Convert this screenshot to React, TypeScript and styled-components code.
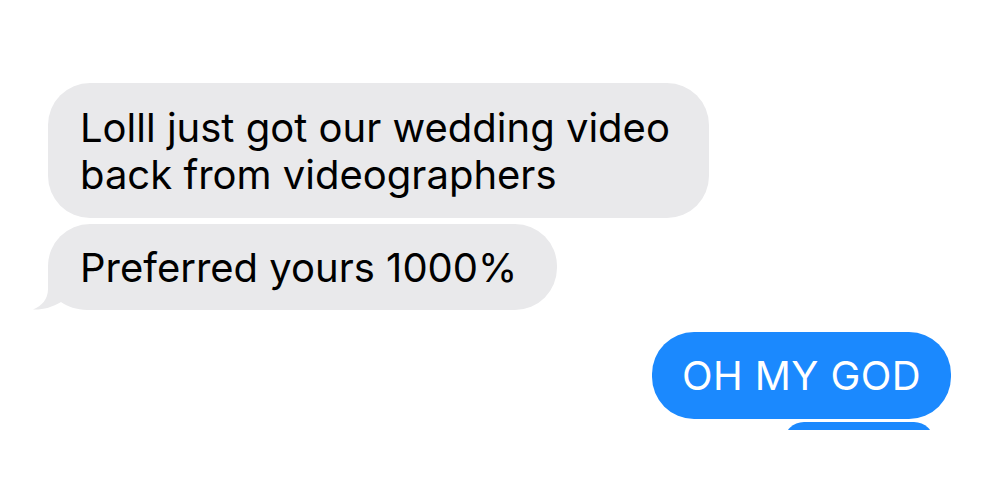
import React from "react";
import styled, { createGlobalStyle } from "styled-components";

const Global = createGlobalStyle`
  html, body { margin: 0; padding: 0; background: #ffffff; }
  body { font-family: Inter, "Noto Sans", "Liberation Sans", sans-serif; }
`;

const Screen = styled.div`
  width: 1000px;
  height: 430px;
  overflow: hidden;
  background: #ffffff;
  display: flex;
  flex-direction: column;
  padding: 83px 49px 0 48px;
  box-sizing: border-box;
`;

const Group = styled.div<{ $side: "left" | "right"; $gapTop?: number; $gap: number }>`
  display: flex;
  flex-direction: column;
  align-items: ${(p) => (p.$side === "left" ? "flex-start" : "flex-end")};
  gap: ${(p) => p.$gap}px;
  margin-top: ${(p) => p.$gapTop ?? 0}px;
`;

const Bubble = styled.div<{ $out?: boolean; $w: number; $h: number }>`
  position: relative;
  box-sizing: border-box;
  width: ${(p) => p.$w}px;
  height: ${(p) => p.$h}px;
  display: flex;
  align-items: center;
  background: ${(p) => (p.$out ? "#1b89fe" : "#e9e9eb")};
  color: ${(p) => (p.$out ? "#ffffff" : "#000000")};
  font-size: 40px;
  line-height: 47px;
  letter-spacing: ${(p) => (p.$out ? "0.4px" : "0px")};
  padding: 0 ${(p) => (p.$out ? 30 : 32)}px;
  border-radius: 42px;
  white-space: nowrap;
`;

const Text = styled.div`
  position: relative;
  z-index: 1;
`;

const TailSvg = styled.svg`
  position: absolute;
  left: -16px;
  bottom: 0;
  width: 60px;
  height: 43px;
  z-index: 0;
`;

const Stub = styled.div`
  width: 150px;
  height: 40px;
  margin-right: 17px;
  background: #1b89fe;
  border-radius: 42px;
`;

export default function App() {
  return (
    <>
      <Global />
      <Screen>
        <Group $side="left" $gap={6}>
          <Bubble $w={661} $h={135}>
            <Text>
              Lolll just got our wedding video
              <br />
              back from videographers
            </Text>
          </Bubble>
          <Bubble $w={509} $h={86}>
            <TailSvg viewBox="0 0 60 43">
              <path
                d="M16 0 L16 22 C16 32 10 39 1 42.5 C10 43 20 40.5 29 35 C36 40 44 42.5 56 43 L60 43 L60 0 Z"
                fill="#e9e9eb"
              />
            </TailSvg>
            <Text>Preferred yours 1000%</Text>
          </Bubble>
        </Group>
        <Group $side="right" $gapTop={22} $gap={3}>
          <Bubble $out $w={299} $h={87}>
            <Text>OH MY GOD</Text>
          </Bubble>
          <Stub />
        </Group>
      </Screen>
    </>
  );
}
